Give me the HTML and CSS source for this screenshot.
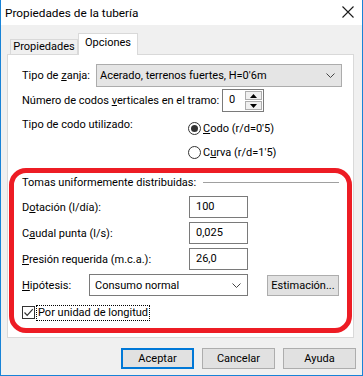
FILE: index.html
```html
<!DOCTYPE html>
<html lang="es">
<head>
    <meta charset="UTF-8">
    <title>Propiedades de la tubería</title>
    <link rel="stylesheet" href="styles.css">
</head>
<body>
    <div class="window">
        <div class="titlebar">
            <span class="title">Propiedades de la tubería</span>
            <svg class="close" width="12" height="12" viewBox="0 0 12 12"><path d="M0.5 0.5L11.5 11.5M11.5 0.5L0.5 11.5" stroke="#1a1a1a" stroke-width="1.1" fill="none"/></svg>
        </div>
        <div class="client">
            <div class="tabs">
                <div class="tab">Propiedades</div>
                <div class="tab active">Opciones</div>
            </div>
            <div class="panel">
                <div class="row r-zanja">
                    <span class="lbl">Tipo de <u>z</u>anja:</span>
                    <div class="combo gray">
                        <span>Acerado, terrenos fuertes, H=0'6m</span>
                        <svg class="chev" width="9" height="5" viewBox="0 0 9 5"><path d="M0.5 0.5L4.5 4.5L8.5 0.5" stroke="#444" fill="none"/></svg>
                    </div>
                </div>
                <div class="row r-codos">
                    <span class="lbl w200">Número de codos <u>v</u>erticales en el tramo:</span>
                    <div class="spin">
                        <span class="spin-val">0</span>
                        <div class="spin-btns">
                            <span class="sb"><svg width="7" height="4" viewBox="0 0 7 4"><path d="M0 4L3.5 0L7 4Z" fill="#000"/></svg></span>
                            <span class="sb"><svg width="7" height="4" viewBox="0 0 7 4"><path d="M0 0L3.5 4L7 0Z" fill="#000"/></svg></span>
                        </div>
                    </div>
                </div>
                <div class="row r-tipo">
                    <span class="lbl w166">Tipo de codo utilizado:</span>
                    <div class="radios">
                        <div class="radio"><span class="dot on"></span><span><u>C</u>odo (r/d=0'5)</span></div>
                        <div class="radio"><span class="dot"></span><span>C<u>u</u>rva (r/d=1'5)</span></div>
                    </div>
                </div>
                <div class="group">
                    <div class="group-title"><span>Tomas uniformemente distribuidas:</span><span class="rule"></span></div>
                    <div class="frow">
                        <span class="lbl w167">D<u>o</u>tación (l/día):</span>
                        <div class="edit">100</div>
                    </div>
                    <div class="frow">
                        <span class="lbl w167">C<u>a</u>udal punta (l/s):</span>
                        <div class="edit">0,025</div>
                    </div>
                    <div class="frow">
                        <span class="lbl w167"><u>P</u>resión requerida (m.c.a.):</span>
                        <div class="edit">26,0</div>
                    </div>
                    <div class="frow">
                        <span class="lbl w67"><u>H</u>ipótesis:</span>
                        <div class="combo white">
                            <span>Consumo normal</span>
                            <svg class="chev" width="9" height="5" viewBox="0 0 9 5"><path d="M0.5 0.5L4.5 4.5L8.5 0.5" stroke="#444" fill="none"/></svg>
                        </div>
                        <button class="btn est">Estimación...</button>
                    </div>
                    <div class="check-row">
                        <span class="check"><svg width="11" height="11" viewBox="0 0 11 11"><path d="M1.5 5.5L4.2 8.3L9.8 2.2" stroke="#333" stroke-width="1.2" fill="none"/></svg></span>
                        <span class="focus">Por unidad de longitud</span>
                    </div>
                </div>
            </div>
            <div class="buttons">
                <button class="btn def">Aceptar</button>
                <button class="btn">Cancelar</button>
                <button class="btn">Ayuda</button>
            </div>
        </div>
        <div class="mark"></div>
    </div>
</body>
</html>
```

FILE: styles.css
```css
body {
    margin: 0;
    padding: 0;
    font-family: Roboto, "Noto Sans", sans-serif;
    font-size: 11px;
    color: #000;
    background: #f0f0f0;
}
.window {
    position: relative;
    width: 363px;
    height: 376px;
    box-sizing: border-box;
    border: 1px solid #1883d7;
    border-top: none;
    background: #f0f0f0;
}
.titlebar {
    height: 25px;
    background: #fff;
    display: flex;
    align-items: center;
    justify-content: space-between;
    padding: 0 8px 0 4px;
}
.title {
    font-size: 11.8px;
}
.close {
    margin-top: -1px;
}
.client {
    padding: 8px 0 0 6px;
}
.tabs {
    display: flex;
    align-items: flex-end;
    height: 21px;
    margin-left: 3px;
    position: relative;
    z-index: 2;
}
.tab {
    height: 15px;
    box-sizing: border-box;
    border: 1px solid #d9d9d9;
    border-bottom: none;
    background: #f0f0f0;
    line-height: 13px;
    width: 68px;
    text-align: center;
    white-space: nowrap;
}
.tab.active {
    height: 22px;
    margin-bottom: -1px;
    background: #fff;
    width: 60px;
    line-height: 17px;
}
.panel {
    width: 347px;
    height: 284px;
    box-sizing: border-box;
    border: 1px solid #d9d9d9;
    background: #fff;
    padding: 9px 11px 0 14px;
    position: relative;
    z-index: 1;
}
.row {
    display: flex;
    align-items: center;
}
.lbl {
    white-space: nowrap;
}
.w200 { width: 200px; }
.w166 { width: 166px; }
.w167 { width: 167px; }
.w67 { width: 67px; }
.r-zanja {
    height: 23px;
    gap: 6px;
}
.combo {
    flex: 1;
    height: 100%;
    box-sizing: border-box;
    display: flex;
    align-items: center;
    justify-content: space-between;
    padding: 0 6px 0 3px;
}
.combo.gray {
    background: #e5e5e5;
    border: 1px solid #acacac;
}
.combo.white {
    flex: none;
    width: 159px;
    background: #fff;
    border: 1px solid #7a7a7a;
    padding-left: 5px;
}
.r-codos {
    height: 23px;
    margin-top: 2px;
}
.spin {
    width: 42px;
    height: 23px;
    box-sizing: border-box;
    border: 1px solid #7a7a7a;
    display: flex;
}
.spin-val {
    flex: 1;
    padding-left: 6px;
    line-height: 19px;
}
.spin-btns {
    width: 17px;
    display: flex;
    flex-direction: column;
    gap: 1px;
    padding: 1px 1px 1px 0;
}
.sb {
    flex: 1;
    border: 1px solid #adadad;
    background: #f0f0f0;
    display: flex;
    align-items: center;
    justify-content: center;
}
.r-tipo {
    align-items: flex-start;
    margin-top: 4px;
}
.r-tipo .lbl {
    line-height: 18px;
}
.radio {
    height: 24px;
    display: flex;
    align-items: center;
    gap: 2px;
}
.dot {
    width: 13px;
    height: 13px;
    box-sizing: border-box;
    border: 1px solid #333;
    border-radius: 50%;
    display: flex;
    align-items: center;
    justify-content: center;
}
.dot.on::after {
    content: "";
    width: 7px;
    height: 7px;
    border-radius: 50%;
    background: #333;
}
.group {
    margin-top: 10px;
    padding-right: 3px;
}
.group-title {
    display: flex;
    align-items: center;
    gap: 7px;
    height: 16px;
}
.rule {
    flex: 1;
    border-top: 1px solid #a0a0a0;
}
.frow {
    display: flex;
    align-items: center;
    height: 22px;
    margin-top: 4px;
}
.group-title + .frow {
    margin-top: 6px;
}
.edit {
    width: 59px;
    height: 22px;
    box-sizing: border-box;
    border: 1px solid #7a7a7a;
    padding-left: 6px;
    line-height: 19px;
}
.btn {
    font-family: inherit;
    font-size: 11px;
    color: #000;
    background: #e1e1e1;
    border: 1px solid #adadad;
    padding: 0;
    height: 21px;
    width: 73px;
}
.btn.est {
    width: 72px;
    margin-left: 19px;
}
.check-row {
    display: flex;
    align-items: center;
    height: 15px;
    margin-top: 9px;
    gap: 2px;
}
.check {
    width: 13px;
    height: 13px;
    box-sizing: border-box;
    border: 1px solid #333;
    display: flex;
    align-items: center;
    justify-content: center;
}
.focus {
    outline: 1px dotted #000;
    line-height: 14px;
    padding: 0 1px;
}
.buttons {
    display: flex;
    justify-content: flex-end;
    gap: 8px;
    margin-top: 10px;
    padding-right: 6px;
}
.btn.def {
    border: 2px solid #0078d7;
}
.mark {
    position: absolute;
    left: 8px;
    top: 168px;
    width: 343px;
    height: 165px;
    box-sizing: border-box;
    border: 5px solid #ed1c24;
    border-radius: 17px;
    z-index: 3;
}
```
